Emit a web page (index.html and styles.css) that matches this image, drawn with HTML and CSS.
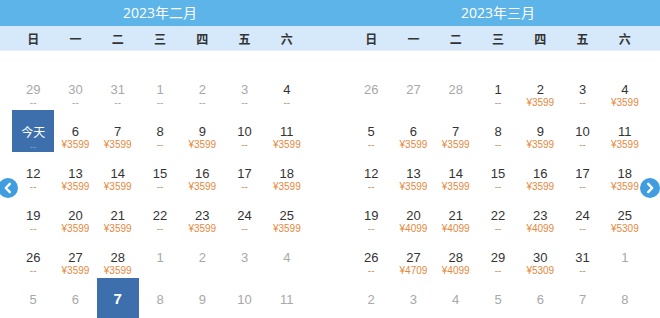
FILE: index.html
```html
<!DOCTYPE html>
<html lang="zh-CN">
<head>
<meta charset="utf-8">
<title>日历</title>
<link rel="stylesheet" href="styles.css">
</head>
<body>
<div class="wrap">
  <section class="month m1">
    <div class="title">2023年二月</div>
    <div class="week"><span>日</span><span>一</span><span>二</span><span>三</span><span>四</span><span>五</span><span>六</span></div>
    <div class="grid">
      <div class="c o"><span class="d">29</span><span class="p">--</span></div>
      <div class="c o"><span class="d">30</span><span class="p">--</span></div>
      <div class="c o"><span class="d">31</span><span class="p">--</span></div>
      <div class="c o"><span class="d">1</span><span class="p">--</span></div>
      <div class="c o"><span class="d">2</span><span class="p">--</span></div>
      <div class="c o"><span class="d">3</span><span class="p">--</span></div>
      <div class="c"><span class="d">4</span><span class="p n">--</span></div>

      <div class="c today"><span class="d">今天</span><span class="p">--</span></div>
      <div class="c"><span class="d">6</span><span class="p">¥3599</span></div>
      <div class="c"><span class="d">7</span><span class="p">¥3599</span></div>
      <div class="c"><span class="d">8</span><span class="p n">--</span></div>
      <div class="c"><span class="d">9</span><span class="p">¥3599</span></div>
      <div class="c"><span class="d">10</span><span class="p n">--</span></div>
      <div class="c"><span class="d">11</span><span class="p">¥3599</span></div>

      <div class="c"><span class="d">12</span><span class="p n">--</span></div>
      <div class="c"><span class="d">13</span><span class="p">¥3599</span></div>
      <div class="c"><span class="d">14</span><span class="p">¥3599</span></div>
      <div class="c"><span class="d">15</span><span class="p n">--</span></div>
      <div class="c"><span class="d">16</span><span class="p">¥3599</span></div>
      <div class="c"><span class="d">17</span><span class="p n">--</span></div>
      <div class="c"><span class="d">18</span><span class="p">¥3599</span></div>

      <div class="c"><span class="d">19</span><span class="p n">--</span></div>
      <div class="c"><span class="d">20</span><span class="p">¥3599</span></div>
      <div class="c"><span class="d">21</span><span class="p">¥3599</span></div>
      <div class="c"><span class="d">22</span><span class="p n">--</span></div>
      <div class="c"><span class="d">23</span><span class="p">¥3599</span></div>
      <div class="c"><span class="d">24</span><span class="p n">--</span></div>
      <div class="c"><span class="d">25</span><span class="p">¥3599</span></div>

      <div class="c"><span class="d">26</span><span class="p n">--</span></div>
      <div class="c"><span class="d">27</span><span class="p">¥3599</span></div>
      <div class="c"><span class="d">28</span><span class="p">¥3599</span></div>
      <div class="c o"><span class="d">1</span></div>
      <div class="c o"><span class="d">2</span></div>
      <div class="c o"><span class="d">3</span></div>
      <div class="c o"><span class="d">4</span></div>

      <div class="c o"><span class="d">5</span></div>
      <div class="c o"><span class="d">6</span></div>
      <div class="c sel"><span class="d">7</span></div>
      <div class="c o"><span class="d">8</span></div>
      <div class="c o"><span class="d">9</span></div>
      <div class="c o"><span class="d">10</span></div>
      <div class="c o"><span class="d">11</span></div>
    </div>
  </section>

  <section class="month m2">
    <div class="title">2023年三月</div>
    <div class="week"><span>日</span><span>一</span><span>二</span><span>三</span><span>四</span><span>五</span><span>六</span></div>
    <div class="grid">
      <div class="c o"><span class="d">26</span></div>
      <div class="c o"><span class="d">27</span></div>
      <div class="c o"><span class="d">28</span></div>
      <div class="c"><span class="d">1</span><span class="p n">--</span></div>
      <div class="c"><span class="d">2</span><span class="p">¥3599</span></div>
      <div class="c"><span class="d">3</span><span class="p n">--</span></div>
      <div class="c"><span class="d">4</span><span class="p">¥3599</span></div>

      <div class="c"><span class="d">5</span><span class="p n">--</span></div>
      <div class="c"><span class="d">6</span><span class="p">¥3599</span></div>
      <div class="c"><span class="d">7</span><span class="p">¥3599</span></div>
      <div class="c"><span class="d">8</span><span class="p n">--</span></div>
      <div class="c"><span class="d">9</span><span class="p">¥3599</span></div>
      <div class="c"><span class="d">10</span><span class="p n">--</span></div>
      <div class="c"><span class="d">11</span><span class="p">¥3599</span></div>

      <div class="c"><span class="d">12</span><span class="p n">--</span></div>
      <div class="c"><span class="d">13</span><span class="p">¥3599</span></div>
      <div class="c"><span class="d">14</span><span class="p">¥3599</span></div>
      <div class="c"><span class="d">15</span><span class="p n">--</span></div>
      <div class="c"><span class="d">16</span><span class="p">¥3599</span></div>
      <div class="c"><span class="d">17</span><span class="p n">--</span></div>
      <div class="c"><span class="d">18</span><span class="p">¥3599</span></div>

      <div class="c"><span class="d">19</span><span class="p n">--</span></div>
      <div class="c"><span class="d">20</span><span class="p">¥4099</span></div>
      <div class="c"><span class="d">21</span><span class="p">¥4099</span></div>
      <div class="c"><span class="d">22</span><span class="p n">--</span></div>
      <div class="c"><span class="d">23</span><span class="p">¥4099</span></div>
      <div class="c"><span class="d">24</span><span class="p n">--</span></div>
      <div class="c"><span class="d">25</span><span class="p">¥5309</span></div>

      <div class="c"><span class="d">26</span><span class="p n">--</span></div>
      <div class="c"><span class="d">27</span><span class="p">¥4709</span></div>
      <div class="c"><span class="d">28</span><span class="p">¥4099</span></div>
      <div class="c"><span class="d">29</span><span class="p n">--</span></div>
      <div class="c"><span class="d">30</span><span class="p">¥5309</span></div>
      <div class="c"><span class="d">31</span><span class="p n">--</span></div>
      <div class="c o"><span class="d">1</span></div>

      <div class="c o"><span class="d">2</span></div>
      <div class="c o"><span class="d">3</span></div>
      <div class="c o"><span class="d">4</span></div>
      <div class="c o"><span class="d">5</span></div>
      <div class="c o"><span class="d">6</span></div>
      <div class="c o"><span class="d">7</span></div>
      <div class="c o"><span class="d">8</span></div>
    </div>
  </section>

  <a class="arrow prev" aria-label="上一月"><svg viewBox="0 0 20 20" width="20" height="20"><circle cx="10" cy="10" r="10" fill="#3f9de0"/><path d="M11.8 5.8 L7.8 10 L11.8 14.2" fill="none" stroke="#fff" stroke-width="2.4" stroke-linecap="round" stroke-linejoin="round"/></svg></a>
  <a class="arrow next" aria-label="下一月"><svg viewBox="0 0 20 20" width="20" height="20"><circle cx="10" cy="10" r="10" fill="#3f9de0"/><path d="M8.2 5.8 L12.2 10 L8.2 14.2" fill="none" stroke="#fff" stroke-width="2.4" stroke-linecap="round" stroke-linejoin="round"/></svg></a>
</div>
</body>
</html>
```

FILE: styles.css
```css
html, body {
  margin: 0;
  padding: 0;
  background: #fff;
}
body {
  width: 660px;
  height: 318px;
  overflow: hidden;
  font-family: "Liberation Sans", "Noto Sans CJK SC", sans-serif;
  color: #333;
}
.wrap {
  position: relative;
  display: flex;
  width: 660px;
}
.month {
  width: 330px;
  display: flex;
  flex-direction: column;
}
.title {
  height: 26px;
  line-height: 26px;
  background: #5cb4e9;
  color: #fff;
  font-family: "Open Sans", "Noto Sans CJK SC", sans-serif;
  font-size: 14px;
  text-align: center;
}
.week {
  height: 24px;
  background: #d6e9fa;
  border-bottom: 1px solid #e4eff9;
  display: grid;
  grid-template-columns: repeat(7, 1fr);
  align-items: center;
  font-family: "Noto Sans CJK SC", sans-serif;
  font-size: 12px;
  font-weight: 700;
  color: #333;
}
.week span {
  text-align: center;
}
.m1 .title, .m1 .week, .m1 .grid { padding: 0 22px 0 12px; }
.m2 .title, .m2 .week, .m2 .grid { padding: 0 14px 0 20px; }
.grid {
  display: grid;
  grid-template-columns: repeat(7, 1fr);
  grid-auto-rows: 42px;
  margin-top: 17px;
}
.c {
  display: flex;
  flex-direction: column;
  align-items: center;
  padding-top: 14px;
  box-sizing: border-box;
}
.d {
  font-size: 13px;
  line-height: 15px;
  color: #333;
}
.p {
  font-size: 10px;
  line-height: 11px;
  color: #e5883d;
}
.p.n {
  color: #c9966a;
}
.o .d { color: #a8a8a8; }
.o .p { color: #a8a8a8; }
.today {
  background: #3d6fac;
}
.today .d {
  color: #fff;
  font-family: "Noto Sans CJK SC", sans-serif;
  font-size: 12px;
  line-height: 15px;
}
.today .p {
  color: #7b9cc6;
  margin-top: 2px;
}
.sel {
  background: #3d6fac;
}
.sel .d {
  color: #fff;
  font-size: 15px;
  font-weight: 700;
  line-height: 14px;
}
.arrow {
  position: absolute;
  top: 178px;
  width: 20px;
  height: 20px;
  display: block;
}
.arrow svg { display: block; }
.prev { left: -2px; }
.next { left: 640px; }
```
